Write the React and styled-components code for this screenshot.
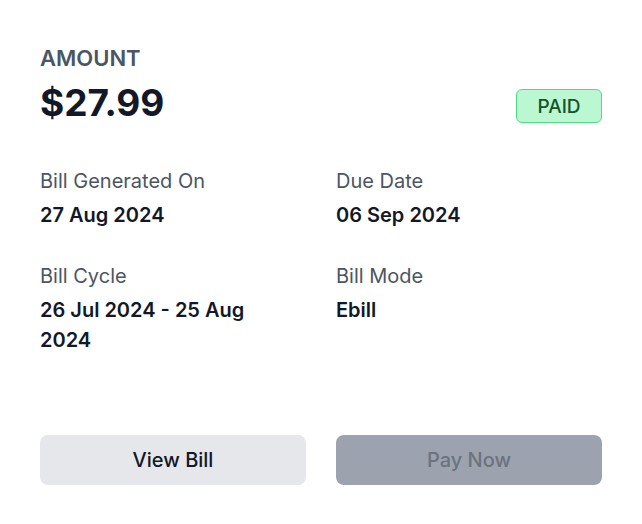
import React from "react";
import styled, { createGlobalStyle } from "styled-components";

const Global = createGlobalStyle`
  html, body { margin: 0; padding: 0; background: #ffffff; }
  body { font-family: Inter, "Noto Sans", sans-serif; -webkit-font-smoothing: antialiased; }
`;

const Card = styled.div`
  width: 642px;
  box-sizing: border-box;
  padding: 44px 40px 39px;
  display: flex;
  flex-direction: column;
  background: #fff;
`;

const Header = styled.div`
  display: flex;
  justify-content: space-between;
  align-items: flex-end;
`;

const AmountBlock = styled.div`
  display: flex;
  flex-direction: column;
`;

const Eyebrow = styled.div`
  font-size: 22px;
  line-height: 28px;
  font-weight: 600;
  color: #4b5563;
`;

const Price = styled.div`
  margin-top: 11px;
  font-size: 37px;
  line-height: 40px;
  font-weight: 700;
  color: #111827;
`;

const Badge = styled.span`
  box-sizing: border-box;
  height: 34px;
  width: 86px;
  display: inline-flex;
  align-items: center;
  justify-content: center;
  border-radius: 6px;
  border: 1px solid #4ade80;
  background: #bbf7d0;
  color: #14532d;
  font-size: 19px;
  font-weight: 500;
  margin-bottom: 0;
`;

const Grid = styled.div`
  margin-top: 43px;
  display: grid;
  grid-template-columns: 248px 248px;
  column-gap: 48px;
  row-gap: 31px;
`;

const Field = styled.div`
  display: flex;
  flex-direction: column;
  gap: 4px;
`;

const Label = styled.div`
  font-size: 20px;
  line-height: 30px;
  color: #4b5563;
`;

const Value = styled.div`
  font-size: 20px;
  line-height: 30px;
  font-weight: 600;
  color: #111827;
`;

const Actions = styled.div`
  margin-top: 80px;
  display: grid;
  grid-template-columns: 1fr 1fr;
  column-gap: 30px;
`;

const Button = styled.button`
  height: 50px;
  border: none;
  border-radius: 8px;
  font-family: inherit;
  font-size: 20px;
  font-weight: 500;
  background: ${(p) => (p.$disabled ? "#9ca3af" : "#e5e7eb")};
  color: ${(p) => (p.$disabled ? "#6b7280" : "#111827")};
  cursor: ${(p) => (p.$disabled ? "not-allowed" : "pointer")};
`;

const fields = [
  { label: "Bill Generated On", value: "27 Aug 2024" },
  { label: "Due Date", value: "06 Sep 2024" },
  { label: "Bill Cycle", value: "26 Jul 2024 - 25 Aug 2024" },
  { label: "Bill Mode", value: "Ebill" },
];

export default function App() {
  return (
    <>
      <Global />
      <Card>
        <Header>
          <AmountBlock>
            <Eyebrow>AMOUNT</Eyebrow>
            <Price>$27.99</Price>
          </AmountBlock>
          <Badge>PAID</Badge>
        </Header>
        <Grid>
          {fields.map((f) => (
            <Field key={f.label}>
              <Label>{f.label}</Label>
              <Value>{f.value}</Value>
            </Field>
          ))}
        </Grid>
        <Actions>
          <Button>View Bill</Button>
          <Button $disabled disabled>
            Pay Now
          </Button>
        </Actions>
      </Card>
    </>
  );
}
